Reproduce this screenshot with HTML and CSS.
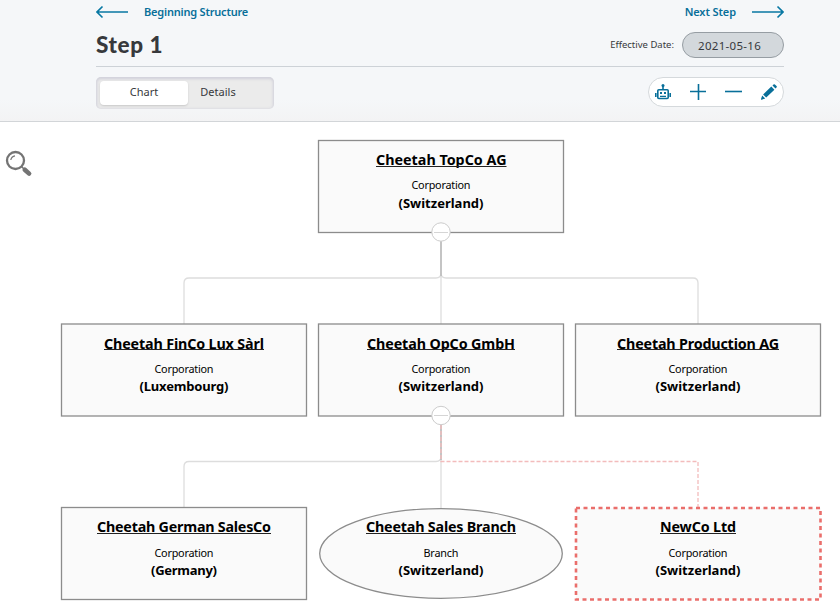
FILE: index.html
```html
<!DOCTYPE html>
<html lang="en">
<head>
<meta charset="utf-8">
<title>Step 1</title>
<link rel="stylesheet" href="styles.css">
</head>
<body>
<header class="header">
  <nav class="steps">
    <a class="step-link"><svg width="32" height="14" viewBox="0 0 32 14"><path d="M1 7H32M6.500 1.500L1 7l5.500 5.500"/></svg><span class="prev-label">Beginning Structure</span></a>
    <a class="step-link next"><span class="next-label">Next Step</span><svg width="32" height="14" viewBox="0 0 32 14"><path d="M0 7H31M25.500 1.500L31 7l-5.500 5.500"/></svg></a>
  </nav>
  <div class="title-row">
    <h1>Step 1</h1>
    <div class="date"><span class="date-label">Effective Date:</span><span class="date-value">2021-05-16</span></div>
  </div>
  <div class="toolbar">
    <div class="tabs"><span class="tab active">Chart</span><span class="tab">Details</span></div>
    <div class="actions">
      <svg width="16" height="16" viewBox="0 0 16 16"><rect x="2.800" y="5.800" width="10.400" height="8.700" rx="1" fill="none" stroke="#086f99" stroke-width="1.600"/><path d="M8 2v4M.8 9v4M15.200 9v4" stroke="#086f99" stroke-width="1.600"/><circle cx="8" cy="1.500" r="1.500" fill="#086f99"/><path d="M5 8h2v2H5zM9 8h2v2H9zM5 11.700h6v1.200H5z" fill="#086f99"/></svg>
      <svg width="16" height="16" viewBox="0 0 16 16"><path d="M8.500 0v16M0 7.500h16" stroke="#086f99" stroke-width="1.600"/></svg>
      <svg width="17" height="16" viewBox="0 0 17 16"><path d="M0 7.500h17" stroke="#086f99" stroke-width="1.600"/></svg>
      <svg width="16" height="16" viewBox="0 0 16 16"><g fill="#086f99"><path d="M10.300 2.600l3.100 3.100-8.200 7.800-3.100-3zM11.500 1.500l1-1q.7-.7 1.400 0l1.600 1.600q.7.7 0 1.400l-1 1zM1.200 11.500l3 3-3.700 1.200q-.7.100-.5-.6z"/></g></svg>
    </div>
  </div>
</header>
<main class="canvas">
<svg class="chart" width="840" height="493" viewBox="0 122 840 493">
  <g class="lens"><circle cx="15.500" cy="160.500" r="8.500"/><path class="shine" d="M10.800 160a5 5 0 0 1 4.200-4.200"/><path class="joint" d="M21.500 166.500l3 3"/><path class="handle" d="M24.800 169.800l4.300 3.800"/></g>
  <g class="wires">
    <path d="M441 241V324M184 324V283q0-5 5-5H436q5 0 5-5M698 324V283q0-5-5-5H446q-5 0-5-5"/>
    <path d="M441 425V509M184 508V466.500q0-5 5-5H436q5 0 5-5"/>
    <path class="trunk" d="M441 241V276M441 425V460"/>
    <path class="planned" d="M441 425V461.500H698V507"/>
  </g>
  <g class="shapes">
    <rect x="318.500" y="140.500" width="245" height="92"/>
    <rect x="61.500" y="324" width="245" height="92"/>
    <rect x="318.500" y="324" width="245" height="92"/>
    <rect x="575.500" y="324" width="245" height="92"/>
    <rect x="61.500" y="507.500" width="245" height="92"/>
    <ellipse cx="441" cy="553.500" rx="121.300" ry="44.800"/>
    <rect class="new" x="576" y="508" width="244.500" height="91.500"/>
  </g>
  <g class="toggles"><circle cx="441" cy="232" r="9.200"/><path d="M434 232.500h14"/><circle cx="441" cy="415.500" r="9.200"/><path d="M434 415.500h14"/></g>
  <g class="name">
    <text x="376" y="165" textLength="130.500">Cheetah TopCo AG</text>
    <text x="104" y="349" textLength="160">Cheetah FinCo Lux Sàrl</text>
    <text x="367" y="349" textLength="148">Cheetah OpCo GmbH</text>
    <text x="617" y="349" textLength="162">Cheetah Production AG</text>
    <text x="97" y="532" textLength="174">Cheetah German SalesCo</text>
    <text x="366" y="532" textLength="150">Cheetah Sales Branch</text>
    <text x="660" y="532" textLength="76">NewCo Ltd</text>
  </g>
  <path class="underline" d="M376 166.500h130.500M104 349.500h160M367 349.500h148M617 349.500h162M97 533.500h174M366 533.500h150M660 533.500h76"/>
  <g class="kind">
    <text x="411.500" y="189" textLength="59">Corporation</text>
    <text x="154.500" y="373" textLength="59">Corporation</text>
    <text x="411.500" y="373" textLength="59">Corporation</text>
    <text x="668.500" y="373" textLength="59">Corporation</text>
    <text x="154.500" y="557" textLength="59">Corporation</text>
    <text x="423.500" y="557" textLength="35">Branch</text>
    <text x="668.500" y="557" textLength="59">Corporation</text>
  </g>
  <g class="country">
    <text x="398.500" y="208" textLength="85">(Switzerland)</text>
    <text x="139.500" y="391" textLength="89">(Luxembourg)</text>
    <text x="398.500" y="391" textLength="85">(Switzerland)</text>
    <text x="655.500" y="391" textLength="85">(Switzerland)</text>
    <text x="151" y="575" textLength="66">(Germany)</text>
    <text x="398.500" y="575" textLength="85">(Switzerland)</text>
    <text x="655.500" y="575" textLength="85">(Switzerland)</text>
  </g>
</svg>
</main>
</body>
</html>
```
FILE: styles.css
```css
* { box-sizing: border-box; }
body { margin: 0; background: #fff; font-family: "Noto Sans", sans-serif; color: #37393c; overflow: hidden; }
.header { height: 122px; padding: 0 56px 0 96px; background: linear-gradient(#f5f7f9 0, #f5f7f9 82%, #f3f3f4 100%); border-bottom: 1px solid #d2d5d8; }
.steps { display: flex; justify-content: space-between; height: 24px; align-items: center; }
.step-link { display: flex; align-items: center; gap: 16px; color: #086f99; font-size: 11px; font-weight: 600; line-height: 14px; white-space: nowrap; }
.step-link svg { fill: none; stroke: #0878a3; stroke-width: 1.6; }
.prev-label { letter-spacing: -.2px; }
.next-label { letter-spacing: -.1px; }
.title-row { display: flex; justify-content: space-between; align-items: center; height: 43px; padding-bottom: 1px; border-bottom: 1px solid #cdd2d7; }
h1 { margin: 0; font: 900 22.5px/30px Lato, sans-serif; letter-spacing: .6px; }
.date { display: flex; align-items: center; gap: 8px; white-space: nowrap; }
.date-label { font-size: 9.5px; letter-spacing: 0; }
.date-value { width: 102px; height: 26px; padding-left: 15px; border: 1px solid #969da3; border-radius: 13px; background: #d3d8dc; font-size: 11.5px; letter-spacing: .3px; line-height: 25px; }
.toolbar { display: flex; justify-content: space-between; padding-top: 10px; }
.tabs { display: flex; width: 178px; height: 32px; padding: 4px; border-radius: 5px; background: #ebebeb; box-shadow: inset 0 1px 3px 1px #d0d0da; font-size: 11px; line-height: 22px; }
.tab { width: 60px; height: 24px; text-align: center; }
.tab.active { width: 88px; border-radius: 4px; background: #fff; box-shadow: 0 1px 2px #c8c8c8; }
.actions { display: flex; align-items: center; justify-content: space-between; width: 136px; height: 30px; padding: 0 6px; border: 1px solid #d5d9dc; border-radius: 15px; background: #fff; }
.chart { display: block; }
.wires path { fill: none; stroke: #ddd; stroke-width: 1.3; }
.wires .trunk { stroke: #bbb; stroke-width: 1.6; }
.wires .planned { stroke: #f3bcbc; stroke-width: 1.3; stroke-dasharray: 4 2; }
.shapes rect, .shapes ellipse { fill: #fafafa; stroke: #8c8c8c; stroke-width: 1.3; }
.shapes .new { stroke: #ea6e6b; stroke-width: 2.6; stroke-dasharray: 4 3.5; }
.toggles circle { fill: #fff; stroke: #ccc; }
.toggles path { stroke: #d5d5d5; }
.lens { fill: none; stroke: #747474; }
.lens circle { stroke-width: 2.3; }
.lens .shine { stroke-width: 1.2; }
.lens .joint { stroke-width: 1.5; }
.lens .handle { stroke-width: 4.6; stroke-linecap: round; }
.name { font-size: 14.3px; font-weight: 700; fill: #000; }
.underline { stroke: #222; stroke-width: 1; }
.kind { font-size: 10.8px; fill: #000; }
.country { font-size: 13px; font-weight: 700; fill: #000; }
```
